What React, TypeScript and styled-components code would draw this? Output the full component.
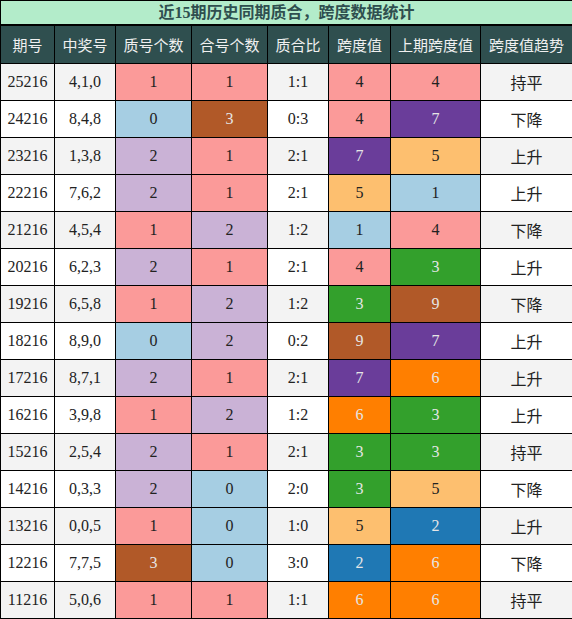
import React from "react";
import styled, { createGlobalStyle } from "styled-components";

const Global = createGlobalStyle`
  html, body { margin: 0; padding: 0; background: #fff; }
  body { font-family: "Liberation Serif", "Noto Sans CJK SC", serif; }
`;

const Table = styled.table`
  width: 572px;
  border-collapse: collapse;
  table-layout: fixed;
  border: 1px solid #000;
`;

const TitleCell = styled.th`
  height: 23px;
  padding: 0;
  background: #b3ecca;
  color: #2f4f4f;
  border: 1px solid #000;
  border-bottom-width: 2px;
  font-family: "Liberation Serif", "Noto Sans CJK SC", serif;
  font-weight: bold;
  font-size: 16px;
  line-height: 22px;
  text-align: center;
`;

const HeadCell = styled.th`
  height: 37px;
  padding: 0;
  background: #2f4f4f;
  color: #f0f0f0;
  border: 1px solid #000;
  font-family: "Noto Sans CJK SC", sans-serif;
  font-weight: normal;
  font-size: 15px;
  text-align: center;
`;

const Row = styled.tr<{ $odd: boolean }>`
  background: ${(p) => (p.$odd ? "#f3f3f3" : "#ffffff")};
`;

const Cell = styled.td<{ $bg?: string; $dark?: boolean; $cjk?: boolean }>`
  height: 36px;
  padding: 0;
  border: 1px solid #000;
  text-align: center;
  background: ${(p) => p.$bg || "transparent"};
  color: ${(p) => (p.$dark ? "#e6e6e6" : "#222")};
  font-family: ${(p) =>
    p.$cjk ? `"Noto Sans CJK SC", sans-serif` : `"Liberation Serif", serif`};
  font-size: 16px;
`;

type Swatch = { bg: string; dark: boolean };

const countColors: Record<number, Swatch> = {
  0: { bg: "#a6cee3", dark: false },
  1: { bg: "#fb9a99", dark: false },
  2: { bg: "#cab2d6", dark: false },
  3: { bg: "#b15928", dark: true },
};

const spanColors: Record<number, Swatch> = {
  0: { bg: "#cab2d6", dark: false },
  1: { bg: "#a6cee3", dark: false },
  2: { bg: "#1f78b4", dark: true },
  3: { bg: "#33a02c", dark: true },
  4: { bg: "#fb9a99", dark: false },
  5: { bg: "#fdbf6f", dark: false },
  6: { bg: "#ff7f00", dark: true },
  7: { bg: "#6a3d9a", dark: true },
  8: { bg: "#e31a1c", dark: true },
  9: { bg: "#b15928", dark: true },
};

const data: [string, string, number, number, string, number, number, string][] = [
  ["25216", "4,1,0", 1, 1, "1:1", 4, 4, "持平"],
  ["24216", "8,4,8", 0, 3, "0:3", 4, 7, "下降"],
  ["23216", "1,3,8", 2, 1, "2:1", 7, 5, "上升"],
  ["22216", "7,6,2", 2, 1, "2:1", 5, 1, "上升"],
  ["21216", "4,5,4", 1, 2, "1:2", 1, 4, "下降"],
  ["20216", "6,2,3", 2, 1, "2:1", 4, 3, "上升"],
  ["19216", "6,5,8", 1, 2, "1:2", 3, 9, "下降"],
  ["18216", "8,9,0", 0, 2, "0:2", 9, 7, "上升"],
  ["17216", "8,7,1", 2, 1, "2:1", 7, 6, "上升"],
  ["16216", "3,9,8", 1, 2, "1:2", 6, 3, "上升"],
  ["15216", "2,5,4", 2, 1, "2:1", 3, 3, "持平"],
  ["14216", "0,3,3", 2, 0, "2:0", 3, 5, "下降"],
  ["13216", "0,0,5", 1, 0, "1:0", 5, 2, "上升"],
  ["12216", "7,7,5", 3, 0, "3:0", 2, 6, "下降"],
  ["11216", "5,0,6", 1, 1, "1:1", 6, 6, "持平"],
];

const widths = [54, 61, 76, 76, 61, 62, 90, 92];
const heads = ["期号", "中奖号", "质号个数", "合号个数", "质合比", "跨度值", "上期跨度值", "跨度值趋势"];

export default function App() {
  return (
    <>
      <Global />
      <Table>
        <colgroup>
          {widths.map((w, i) => (
            <col key={i} style={{ width: w }} />
          ))}
        </colgroup>
        <thead>
          <tr>
            <TitleCell colSpan={8}>近15期历史同期质合，跨度数据统计</TitleCell>
          </tr>
          <tr>
            {heads.map((h) => (
              <HeadCell key={h}>{h}</HeadCell>
            ))}
          </tr>
        </thead>
        <tbody>
          {data.map((r, i) => {
            const [issue, nums, prime, comp, ratio, span, prev, trend] = r;
            const p = countColors[prime];
            const c = countColors[comp];
            const s = spanColors[span];
            const pv = spanColors[prev];
            return (
              <Row key={issue} $odd={i % 2 === 0}>
                <Cell>{issue}</Cell>
                <Cell>{nums}</Cell>
                <Cell $bg={p.bg} $dark={p.dark}>{prime}</Cell>
                <Cell $bg={c.bg} $dark={c.dark}>{comp}</Cell>
                <Cell>{ratio}</Cell>
                <Cell $bg={s.bg} $dark={s.dark}>{span}</Cell>
                <Cell $bg={pv.bg} $dark={pv.dark}>{prev}</Cell>
                <Cell $cjk>{trend}</Cell>
              </Row>
            );
          })}
        </tbody>
      </Table>
    </>
  );
}
